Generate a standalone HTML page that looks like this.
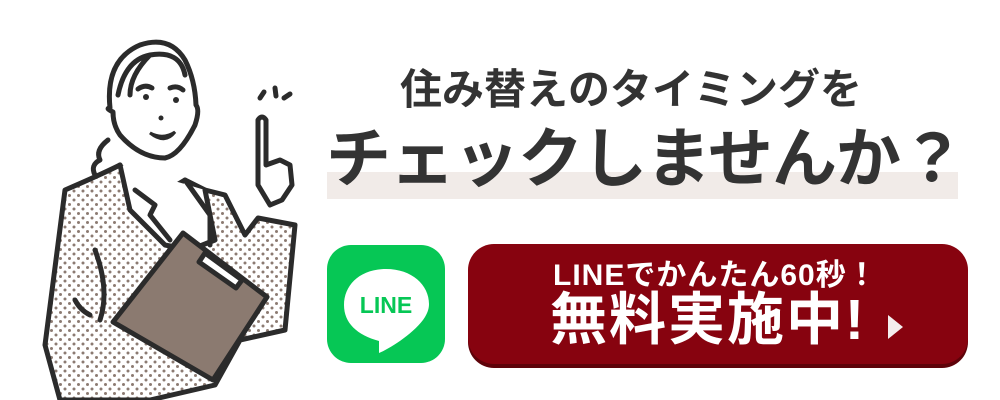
<!DOCTYPE html>
<html><head><meta charset="utf-8"><style>
body{margin:0;width:1000px;height:400px;background:#fff;overflow:hidden;position:relative;font-family:"Liberation Sans","Noto Sans CJK JP",sans-serif}
.t1{position:absolute;left:400px;top:62px;white-space:nowrap;font-size:42px;font-weight:bold;color:#333;letter-spacing:0px;line-height:56px}
.band{position:absolute;left:327px;top:172px;width:631px;height:27px;background:#f1ebe8}
.t2{position:absolute;left:326px;top:116px;white-space:nowrap;font-size:65px;font-weight:bold;color:#333;letter-spacing:-1px;line-height:86px}
.line{position:absolute;left:327px;top:245px;width:118px;height:118px;background:#06c755;border-radius:24px}
.btn{position:absolute;left:468px;top:244px;width:500px;height:120px;background:#87030f;border-radius:26px;box-shadow:0 4px 0 #5e0209}
.b1{position:absolute;left:85px;top:12px;white-space:nowrap;color:#fff;font-size:30px;font-weight:bold;letter-spacing:1px;line-height:40px}
.b2{position:absolute;left:82px;top:40px;white-space:nowrap;color:#fff;font-size:57px;font-weight:bold;letter-spacing:2px;line-height:72px}
.tri{position:absolute;left:420px;top:71px;width:0;height:0;border-left:15px solid #f4eeee;border-top:12px solid transparent;border-bottom:12px solid transparent}
</style></head><body>
<svg width="330" height="400" style="position:absolute;left:0;top:0">
<defs><pattern id="d" width="9" height="9" patternUnits="userSpaceOnUse"><circle cx="2" cy="2" r="1.5" fill="#8c7b72"/><circle cx="6.5" cy="6.5" r="1.5" fill="#8c7b72"/></pattern></defs>
<g stroke="#2b2b2b" stroke-width="5" stroke-linecap="round" stroke-linejoin="round">
<path d="M65 190 Q100 175 120 165 L135 190 L160 195 L185 180 L205 190 L225 195 L245 235 L258 218 L295 225 L285 330 L240 340 L215 385 L150 400 L60 400 L45 345 Z" fill="url(#d)"/>
<path d="M120 165 L130 210 L165 245 L190 250 L215 240 L205 190" fill="#fff"/>
<path d="M135 190 L155 205 L150 215 L170 240" fill="none"/>
<path d="M185 180 L210 215 L210 245" fill="none"/>
<path d="M95 250 Q110 290 100 320" fill="none"/>
<path d="M75 300 Q80 310 90 315" fill="none"/>
<path d="M183 233 L267 297 L213 380 L113 322 Z" fill="#8b7a70"/>
<path d="M205 253 L242 280 L236 288 L199 262 Z" fill="#fff"/>
<path d="M110 108 Q105 60 140 45 Q170 35 185 60 Q195 80 196 105 Q200 110 195 125 Q180 155 165 158 Q140 158 120 135 Q113 125 113 112 Q105 108 110 108 Z" fill="#fff"/>
<path d="M118 95 Q125 60 150 55 Q130 75 130 95 M150 55 Q180 50 185 75" fill="none"/>
<path d="M138 89 Q145 84 152 88 M170 88 Q177 85 183 90" fill="none"/>
<path d="M258 185 L258 120 Q262 114 266 120 L266 165 L280 160 L290 165 L292 185 L282 200 L270 205 Z" fill="#fff"/>
<path d="M260 98 L264 92 M275 88 L276 96 M284 98 L290 94" fill="none"/>
<path d="M108 140 Q95 150 100 160 Q90 165 95 175" fill="none"/>
</g>
<circle cx="146" cy="97" r="3" fill="#2b2b2b"/><circle cx="176" cy="100" r="3" fill="#2b2b2b"/><circle cx="161" cy="118" r="2.5" fill="#2b2b2b"/>
<path d="M150 133 Q163 140 175 132 Q165 145 150 133Z" fill="#2b2b2b" stroke="#2b2b2b" stroke-width="3"/>
</svg>
<div class="t1">住み替えのタイミングを</div>
<div class="band"></div>
<div class="t2">チェックしませんか？</div>
<div class="line"><svg width="118" height="118"><path d="M59 24 C33 24 17 40 17 60 C17 78 30 90 52 96 L52 108 C62 104 88 88 98 72 C101 67 102 63 102 59 C102 40 85 24 59 24Z" fill="#fff"/><text x="59" y="68" text-anchor="middle" font-family="Liberation Sans" font-weight="bold" font-size="23" fill="#06c755">LINE</text></svg></div>
<div class="btn"><div class="b1">LINEでかんたん60秒！</div><div class="b2">無料実施中!</div><div class="tri"></div></div>
</body></html>
